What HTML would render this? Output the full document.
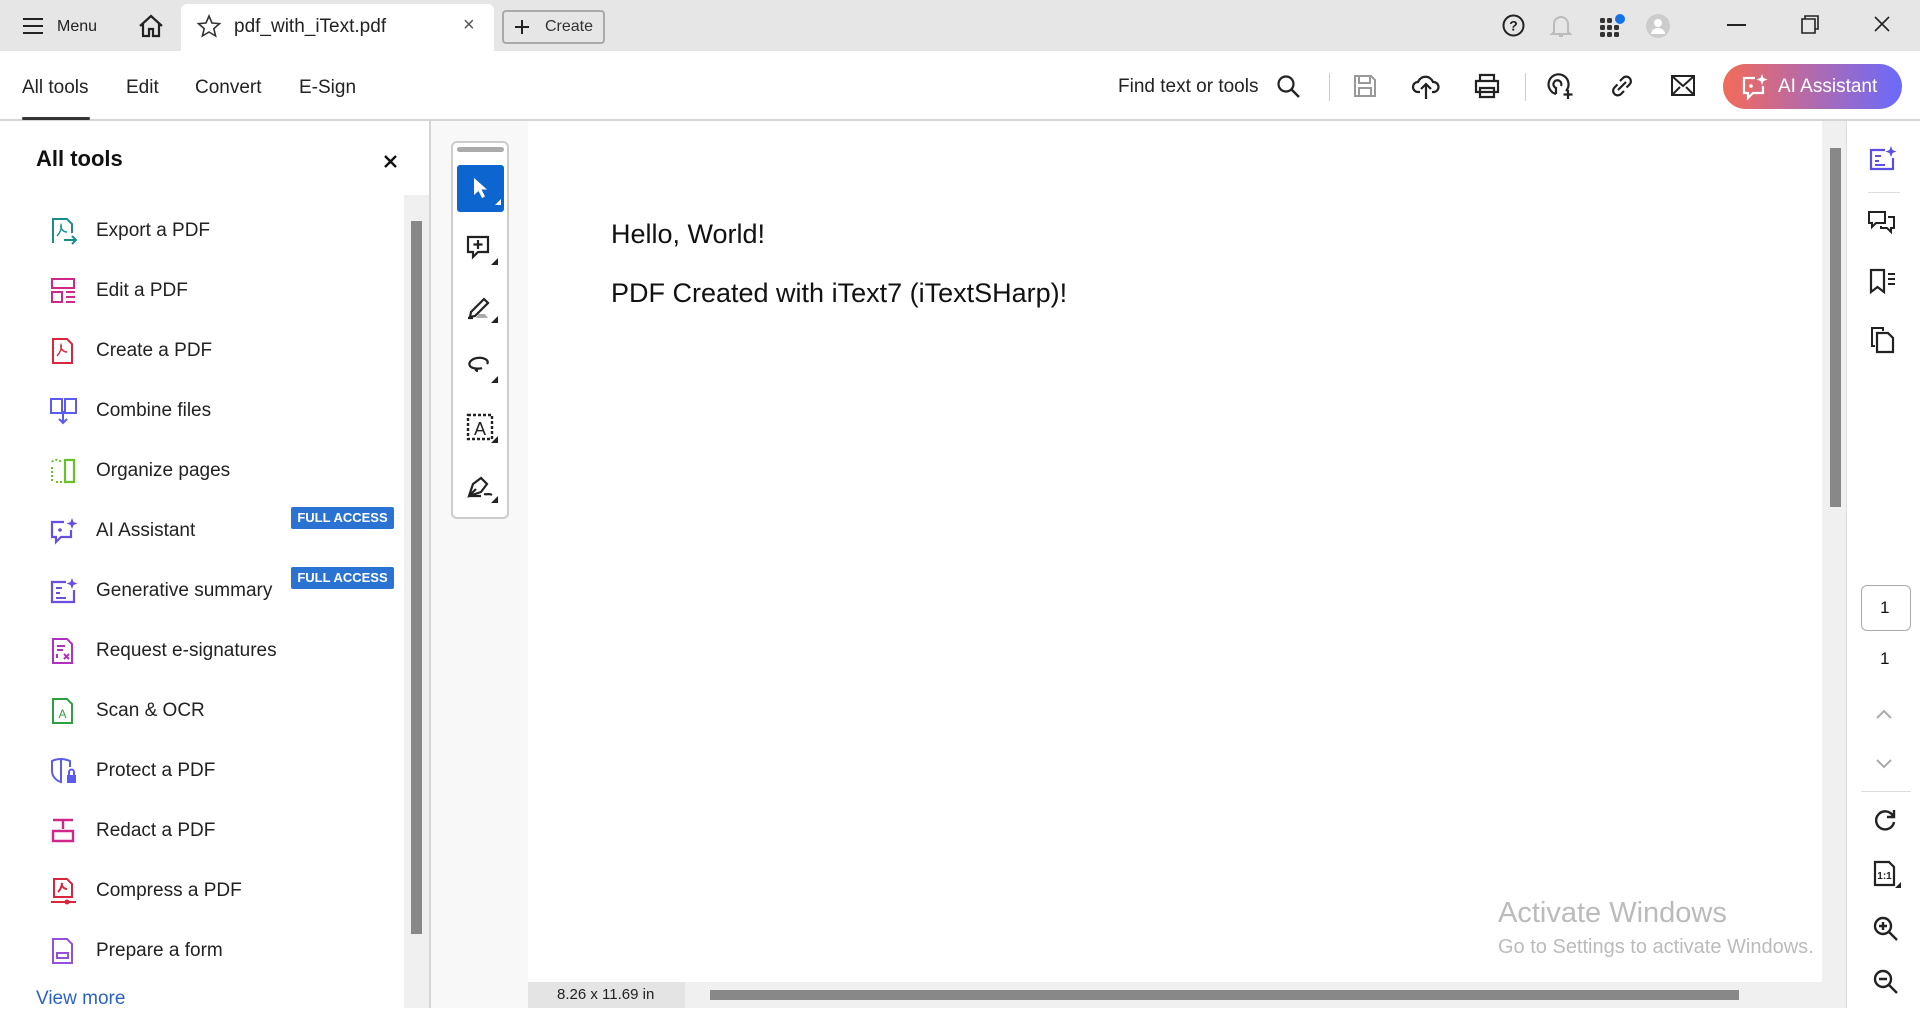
<!DOCTYPE html>
<html><head><meta charset="utf-8"><style>
*{margin:0;padding:0;box-sizing:border-box}
body{width:1920px;height:1008px;overflow:hidden;font-family:"Liberation Sans",sans-serif;color:#222;background:#fff;position:relative}
.a{position:absolute}
.t{position:absolute;white-space:nowrap}
svg{position:absolute;overflow:visible}
.item{position:absolute;left:0;height:60px;width:400px}
.item .lbl{position:absolute;left:96px;top:50%;transform:translateY(-50%);font-size:19px;color:#222}
.item svg{left:50px;top:16px}
.badge{position:absolute;left:291px;width:103px;height:22px;background:#2b73d2;color:#fff;font-size:13px;font-weight:bold;text-align:center;line-height:22px;border-radius:2px}
</style></head><body>
<!-- title bar -->
<div class="a" style="left:0;top:0;width:1920px;height:51px;background:#e6e6e6"></div>
<svg style="left:23px;top:18px" width="20" height="16"><path d="M0 1h20M0 8h20M0 15h20" stroke="#222" stroke-width="2"/></svg>
<div class="t" style="left:57px;top:18px;font-size:16px">Menu</div>
<svg style="left:138px;top:14px" width="26" height="24"><path d="M2 12L13 2l11 10M5 10v12h6v-7h4v7h6V10" fill="none" stroke="#222" stroke-width="2.2"/></svg>
<div class="a" style="left:181px;top:4px;width:313px;height:47px;background:#fff;border-radius:6px 6px 0 0"></div>
<svg style="left:198px;top:15px" width="22" height="22"><path d="M11 1l3 7 7.5.6-5.7 5 1.8 7.4L11 17l-6.6 4 1.8-7.4L.5 8.6 8 8z" fill="none" stroke="#333" stroke-width="1.6"/></svg>
<div class="t" style="left:234px;top:16px;font-size:19px">pdf_with_iText.pdf</div>
<div class="t" style="left:463px;top:14px;font-size:20px;color:#555">×</div>
<div class="a" style="left:502px;top:10px;width:103px;height:34px;border:2px solid #aaa;border-radius:4px;background:#e6e6e6"></div>
<svg style="left:515px;top:20px" width="14" height="14"><path d="M7 0v14M0 7h14" stroke="#222" stroke-width="2"/></svg>
<div class="t" style="left:545px;top:18px;font-size:16px;color:#333">Create</div>
<svg style="left:1502px;top:14px" width="23" height="23"><circle cx="11.5" cy="11.5" r="10" fill="none" stroke="#222" stroke-width="2"/><text x="11.5" y="16.5" font-size="14" text-anchor="middle" font-family="Liberation Sans" font-weight="bold" fill="#222">?</text></svg>
<svg style="left:1551px;top:13px" width="20" height="26"><path d="M3 19V11a7 7 0 0 1 14 0v8l2 2H1zM8 23h4" fill="none" stroke="#bbb" stroke-width="2"/></svg>
<svg style="left:1600px;top:14px" width="26" height="24"><g fill="#333"><rect x="0" y="4" width="5" height="5" rx="1.5"/><rect x="7" y="4" width="5" height="5" rx="1.5"/><rect x="0" y="11" width="5" height="5" rx="1.5"/><rect x="7" y="11" width="5" height="5" rx="1.5"/><rect x="14" y="11" width="5" height="5" rx="1.5"/><rect x="0" y="18" width="5" height="5" rx="1.5"/><rect x="7" y="18" width="5" height="5" rx="1.5"/><rect x="14" y="18" width="5" height="5" rx="1.5"/></g><circle cx="20" cy="5" r="5" fill="#1473e6"/></svg>
<svg style="left:1646px;top:14px" width="24" height="24"><circle cx="12" cy="12" r="12" fill="#ccc"/><circle cx="12" cy="9" r="4" fill="#fff"/><path d="M5 20a7 6 0 0 1 14 0z" fill="#fff"/></svg>
<div class="a" style="left:1727px;top:24px;width:19px;height:2px;background:#222"></div>
<svg style="left:1801px;top:15px" width="18" height="19"><path d="M4 4V1h13v13h-3M1 4h13v14H1z" fill="none" stroke="#222" stroke-width="1.6"/></svg>
<svg style="left:1874px;top:16px" width="16" height="16"><path d="M1 1l14 14M15 1L1 15" stroke="#222" stroke-width="1.6"/></svg>
<!-- toolbar -->
<div class="a" style="left:0;top:119px;width:1920px;height:2px;background:#d5d5d5"></div>
<div class="t" style="left:22px;top:77px;font-size:19px">All tools</div>
<div class="a" style="left:22px;top:117px;width:68px;height:3px;background:#333;border-radius:2px"></div>
<div class="t" style="left:126px;top:77px;font-size:19px">Edit</div>
<div class="t" style="left:195px;top:77px;font-size:19px">Convert</div>
<div class="t" style="left:299px;top:77px;font-size:19px">E-Sign</div>
<div class="t" style="left:1118px;top:76px;font-size:19px">Find text or tools</div>
<svg style="left:1277px;top:75px" width="24" height="24"><circle cx="9" cy="9" r="7.5" fill="none" stroke="#222" stroke-width="2.2"/><path d="M14.5 14.5L22 22" stroke="#222" stroke-width="2.4"/></svg>
<div class="a" style="left:1329px;top:73px;width:1px;height:28px;background:#ccc"></div>
<svg style="left:1353px;top:74px" width="24" height="24"><path d="M2 2h16l4 4v16H2zM6 2v7h11V2M6 22v-8h12v8" fill="none" stroke="#999" stroke-width="2"/></svg>
<svg style="left:1412px;top:72px" width="28" height="28"><path d="M8 20H6a5 5 0 0 1 0-10 8 8 0 0 1 15 0 5 5 0 0 1 1 10h-2M14 27V12M9 17l5-5 5 5" fill="none" stroke="#222" stroke-width="2.2"/></svg>
<svg style="left:1474px;top:73px" width="26" height="26"><path d="M6 8V2h14v6M2 8h22v11H2zM6 15h14v9H6zM9 19h8" fill="none" stroke="#222" stroke-width="2.2"/></svg>
<div class="a" style="left:1525px;top:73px;width:1px;height:28px;background:#ccc"></div>
<svg style="left:1547px;top:72px" width="28" height="28"><path d="M9 22a10 10 0 1 1 10-3M9 22v-6a4 4 0 1 1 5-2M21 18v9M16.5 22.5h9" fill="none" stroke="#222" stroke-width="2.2"/></svg>
<svg style="left:1609px;top:73px" width="26" height="26"><path d="M11 8l3-3a4.5 4.5 0 0 1 6.5 6.5l-3 3M15 18l-3 3a4.5 4.5 0 0 1-6.5-6.5l3-3M9 17l8-8" fill="none" stroke="#222" stroke-width="2.2"/></svg>
<svg style="left:1671px;top:75px" width="24" height="21"><path d="M1 1h22v19H1zM1 1l11 10L23 1M1 20l8-8M23 20l-8-8" fill="none" stroke="#222" stroke-width="2"/></svg>
<div class="a" style="left:1723px;top:64px;width:179px;height:45px;border-radius:23px;background:linear-gradient(90deg,#f36b58,#b86aa6 45%,#6a6afc)"></div>
<svg style="left:1741px;top:73px" width="28" height="28"><path d="M14 5H3v15h4v5l5-5h10v-7" fill="none" stroke="#fff" stroke-width="2.2"/><circle cx="10" cy="13" r="1.8" fill="#fff"/><path d="M21 1l1.5 4 4 1.5-4 1.5L21 12l-1.5-4-4-1.5 4-1.5z" fill="#fff"/></svg>
<div class="t" style="left:1778px;top:76px;font-size:19px;color:#fff">AI Assistant</div>
<!-- left panel -->
<div class="a" style="left:429px;top:121px;width:2px;height:887px;background:#d5d5d5"></div>
<div class="t" style="left:36px;top:146px;font-size:22px;font-weight:bold;color:#111">All tools</div>
<svg style="left:384px;top:155px" width="13" height="13"><path d="M1 1l11 11M12 1L1 12" stroke="#111" stroke-width="2.4"/></svg>
<div class="a" style="left:404px;top:195px;width:25px;height:813px;background:#f0f0f0"></div>
<div class="a" style="left:411px;top:221px;width:11px;height:713px;background:#888"></div>

<div class="item" style="top:201px"><svg width="28" height="28"><path d="M3 26V2h14l5 5v9" fill="none" stroke="#1a8c8c" stroke-width="2"/><path d="M7 19c3-3 5-8 4-11-1 3 2 7 6 7" fill="none" stroke="#1a8c8c" stroke-width="1.4"/><path d="M14 23h12M22 19l4 4-4 4" fill="none" stroke="#1a8c8c" stroke-width="2"/></svg><div class="lbl">Export a PDF</div></div>
<div class="item" style="top:261px"><svg width="28" height="28"><path d="M2 2h22v9H2zM2 15h10v10H2zM16 15h9M16 20h9M16 25h9" fill="none" stroke="#d0288a" stroke-width="2"/></svg><div class="lbl">Edit a PDF</div></div>
<div class="item" style="top:321px"><svg width="28" height="28"><path d="M3 2h14l5 5v19H3z" fill="none" stroke="#d7263d" stroke-width="2"/><path d="M7 19c3-3 5-8 4-11-1 3 2 7 6 7" fill="none" stroke="#d7263d" stroke-width="1.4"/></svg><div class="lbl">Create a PDF</div></div>
<div class="item" style="top:381px"><svg width="28" height="28"><path d="M1 2h11v14H1zM15 2h11v14H15zM13 14v12M9 22l4 4 4-4" fill="none" stroke="#5b5bf0" stroke-width="2"/></svg><div class="lbl">Combine files</div></div>
<div class="item" style="top:441px"><svg width="28" height="28"><path d="M15 3h9v22h-9z" fill="none" stroke="#6bbf2a" stroke-width="2.2"/><path d="M2 10v15M6 25h6M2 5c2-3 7-3 9 0" fill="none" stroke="#6bbf2a" stroke-width="2" stroke-dasharray="2 2"/></svg><div class="lbl">Organize pages</div></div>
<div class="item" style="top:501px"><svg width="28" height="28"><path d="M14 5H2v15h4v5l5-5h10v-7" fill="none" stroke="#6a4ee0" stroke-width="2.2"/><circle cx="10" cy="13" r="1.8" fill="#6a4ee0"/><path d="M22 1l1.5 4 4 1.5-4 1.5L22 12l-1.5-4-4-1.5 4-1.5z" fill="#6a4ee0"/></svg><div class="lbl">AI Assistant</div></div>
<div class="badge" style="top:507px">FULL ACCESS</div>
<div class="item" style="top:561px"><svg width="28" height="28"><path d="M16 5H2v20h22V13" fill="none" stroke="#6a4ee0" stroke-width="2.2"/><path d="M6 11h6M6 16h4M6 21h10" stroke="#6a4ee0" stroke-width="2"/><path d="M22 1l1.5 4 4 1.5-4 1.5L22 12l-1.5-4-4-1.5 4-1.5z" fill="#6a4ee0"/></svg><div class="lbl">Generative summary</div></div>
<div class="badge" style="top:567px">FULL ACCESS</div>
<div class="item" style="top:621px"><svg width="28" height="28"><path d="M3 2h14l5 5v19H3z" fill="none" stroke="#b030c0" stroke-width="2"/><path d="M7 9h8M7 13h6M7 17v4M14 17l5 5M19 17l-5 5" stroke="#b030c0" stroke-width="2"/></svg><div class="lbl">Request e-signatures</div></div>
<div class="item" style="top:681px"><svg width="28" height="28"><path d="M3 2h14l5 5v19H3z" fill="none" stroke="#2ea043" stroke-width="2"/><text x="12.5" y="21" font-size="12" text-anchor="middle" font-family="Liberation Sans" fill="#2ea043">A</text></svg><div class="lbl">Scan &amp; OCR</div></div>
<div class="item" style="top:741px"><svg width="28" height="28"><path d="M11 2C6 2 2 4 2 4v10c0 6 5 10 9 11V2c4 0 9 2 9 2v6" fill="none" stroke="#5b5bf0" stroke-width="2"/><rect x="17" y="18" width="9" height="8" fill="#5b5bf0"/><path d="M19 18v-3a2.5 2.5 0 0 1 5 0v3" fill="none" stroke="#5b5bf0" stroke-width="2"/></svg><div class="lbl">Protect a PDF</div></div>
<div class="item" style="top:801px"><svg width="28" height="28"><path d="M3 3h20M13 3v9M3 14h20v10H3z" fill="none" stroke="#d0288a" stroke-width="2.4"/></svg><div class="lbl">Redact a PDF</div></div>
<div class="item" style="top:861px"><svg width="28" height="28"><path d="M4 2h13l5 5v13H4z" fill="none" stroke="#d7263d" stroke-width="2"/><path d="M8 15c3-3 4-7 4-9-1 3 2 6 5 6M1 25h25" fill="none" stroke="#d7263d" stroke-width="2"/><circle cx="17" cy="25" r="2.5" fill="#d7263d"/></svg><div class="lbl">Compress a PDF</div></div>
<div class="item" style="top:921px"><svg width="28" height="28"><path d="M3 2h14l5 5v19H3z" fill="none" stroke="#9450d8" stroke-width="2"/><path d="M7 16h11v5H7z" fill="none" stroke="#9450d8" stroke-width="2"/></svg><div class="lbl">Prepare a form</div></div>
<div class="t" style="left:36px;top:988px;font-size:19px;color:#2b63c4">View more</div>

<!-- canvas -->
<div class="a" style="left:431px;top:121px;width:97px;height:887px;background:#f8f8f8"></div>
<div class="a" style="left:528px;top:121px;width:1296px;height:861px;background:#fff"></div>
<div class="a" style="left:1822px;top:121px;width:24px;height:887px;background:#f0f0f0"></div>
<div class="a" style="left:1830px;top:148px;width:11px;height:359px;background:#888"></div>
<div class="a" style="left:528px;top:982px;width:1294px;height:26px;background:#f0f0f0"></div>
<div class="a" style="left:528px;top:982px;width:157px;height:26px;background:#e4e4e4"></div>
<div class="t" style="left:557px;top:986px;font-size:15px;color:#222">8.26 x 11.69 in</div>
<div class="a" style="left:710px;top:990px;width:1029px;height:10px;background:#888"></div>
<div class="t" style="left:611px;top:219px;font-size:27px;color:#111">Hello, World!</div>
<div class="t" style="left:611px;top:278px;font-size:27px;color:#111">PDF Created with iText7 (iTextSHarp)!</div>
<div class="t" style="left:1498px;top:897px;font-size:29px;color:#bbb">Activate Windows</div>
<div class="t" style="left:1498px;top:936px;font-size:20px;color:#bbb">Go to Settings to activate Windows.</div>

<!-- tool strip -->
<div class="a" style="left:451px;top:141px;width:58px;height:378px;border:2px solid #ccc;border-radius:6px;background:#fff"></div>
<div class="a" style="left:457px;top:147px;width:47px;height:5px;background:#aaa;border-radius:3px"></div>
<div class="a" style="left:457px;top:165px;width:47px;height:47px;background:#0d66d0;border-radius:3px"></div>
<svg style="left:473px;top:177px" width="28" height="28"><path d="M1 1v17l4.5-4 3.5 7 3-1.5-3.5-7H14z" fill="#fff"/><path d="M28 22v6h-6z" fill="#fff"/></svg>
<svg style="left:467px;top:236px" width="32" height="30"><path d="M1 1h20v15H11l-5 5v-5H1z" fill="none" stroke="#222" stroke-width="2.2"/><path d="M11 4v9M6.5 8.5h9" stroke="#222" stroke-width="2.2"/><path d="M31 22v7h-7z" fill="#222"/></svg>
<svg style="left:467px;top:294px" width="32" height="30"><path d="M4 18L17 5l4 4L8 22l-5 1zM1 24h5" fill="none" stroke="#222" stroke-width="2.2"/><path d="M9 24h12l-3-4H12z" fill="#aaa"/><path d="M31 22v7h-7z" fill="#222"/></svg>
<svg style="left:467px;top:354px" width="32" height="30"><path d="M20 10c3-4-4-7-10-6S1 9 3 12s10 3 12 2M9 14c-1 1 0 3 2 3" fill="none" stroke="#222" stroke-width="2.2"/><path d="M31 22v7h-7z" fill="#222"/></svg>
<svg style="left:467px;top:414px" width="32" height="30"><rect x="1" y="1" width="24" height="24" fill="none" stroke="#222" stroke-width="2.4" stroke-dasharray="3 2"/><text x="13" y="21" font-size="18" text-anchor="middle" font-family="Liberation Sans" fill="#222">A</text><path d="M31 22v7h-7z" fill="#222"/></svg>
<svg style="left:467px;top:474px" width="32" height="30"><path d="M2 22l4-12 8-6 6 6-6 8zM2 22l7-7M2 22h12M17 20c3 1 5-1 8 1" fill="none" stroke="#222" stroke-width="2.2"/><path d="M31 22v7h-7z" fill="#222"/></svg>

<!-- right sidebar -->
<div class="a" style="left:1846px;top:121px;width:1px;height:887px;background:#ddd"></div>
<svg style="left:1869px;top:146px" width="28" height="26"><path d="M16 4H2v19h22V12" fill="none" stroke="#5b4ee0" stroke-width="2.2"/><path d="M6 10h6M6 15h4M6 19h10" stroke="#5b4ee0" stroke-width="2"/><path d="M22 0l1.5 4 4 1.5-4 1.5L22 11l-1.5-4-4-1.5 4-1.5z" fill="#5b4ee0"/></svg>
<div class="a" style="left:1868px;top:192px;width:32px;height:1px;background:#ddd"></div>
<svg style="left:1868px;top:210px" width="28" height="26"><path d="M1 2h16v11H8l-4 4v-4H1zM20 7h6v11h-3v4l-4-4h-6v-2" fill="none" stroke="#222" stroke-width="2"/></svg>
<svg style="left:1869px;top:268px" width="28" height="26"><path d="M2 2h13v22l-6.5-5L2 24z" fill="none" stroke="#222" stroke-width="2.2"/><path d="M19 6h7M19 11h7M19 16h7" stroke="#222" stroke-width="2"/></svg>
<svg style="left:1870px;top:326px" width="26" height="28"><path d="M5 20H2V2h11v3" fill="none" stroke="#222" stroke-width="2"/><path d="M7 7h11l5 5v14H7z" fill="none" stroke="#222" stroke-width="2.2"/></svg>
<div class="a" style="left:1861px;top:585px;width:50px;height:46px;border:1px solid #aaa;border-radius:6px"></div>
<div class="t" style="left:1880px;top:598px;font-size:17px;color:#111">1</div>
<div class="t" style="left:1880px;top:649px;font-size:17px;color:#111">1</div>
<svg style="left:1876px;top:709px" width="16" height="10"><path d="M1 9l7-7 7 7" fill="none" stroke="#aaa" stroke-width="2"/></svg>
<svg style="left:1876px;top:759px" width="16" height="10"><path d="M1 1l7 7 7-7" fill="none" stroke="#aaa" stroke-width="2"/></svg>
<div class="a" style="left:1861px;top:791px;width:50px;height:1px;background:#ddd"></div>
<svg style="left:1873px;top:808px" width="24" height="24"><path d="M20 8a9 9 0 1 0 1 6M21 2v7h-7" fill="none" stroke="#222" stroke-width="2.4"/></svg>
<svg style="left:1873px;top:860px" width="28" height="28"><path d="M2 2h14l5 5v18H2z" fill="none" stroke="#222" stroke-width="2.2"/><text x="11.5" y="19" font-size="10" text-anchor="middle" font-family="Liberation Sans" font-weight="bold" fill="#222">1:1</text><path d="M28 22v6h-6z" fill="#222"/></svg>
<svg style="left:1873px;top:916px" width="26" height="26"><circle cx="10" cy="10" r="8" fill="none" stroke="#222" stroke-width="2.4"/><path d="M16 16l8 8M6 10h8M10 6v8" stroke="#222" stroke-width="2.4"/></svg>
<svg style="left:1873px;top:969px" width="26" height="26"><circle cx="10" cy="10" r="8" fill="none" stroke="#222" stroke-width="2.4"/><path d="M16 16l8 8M6 10h8" stroke="#222" stroke-width="2.4"/></svg>
</body></html>
